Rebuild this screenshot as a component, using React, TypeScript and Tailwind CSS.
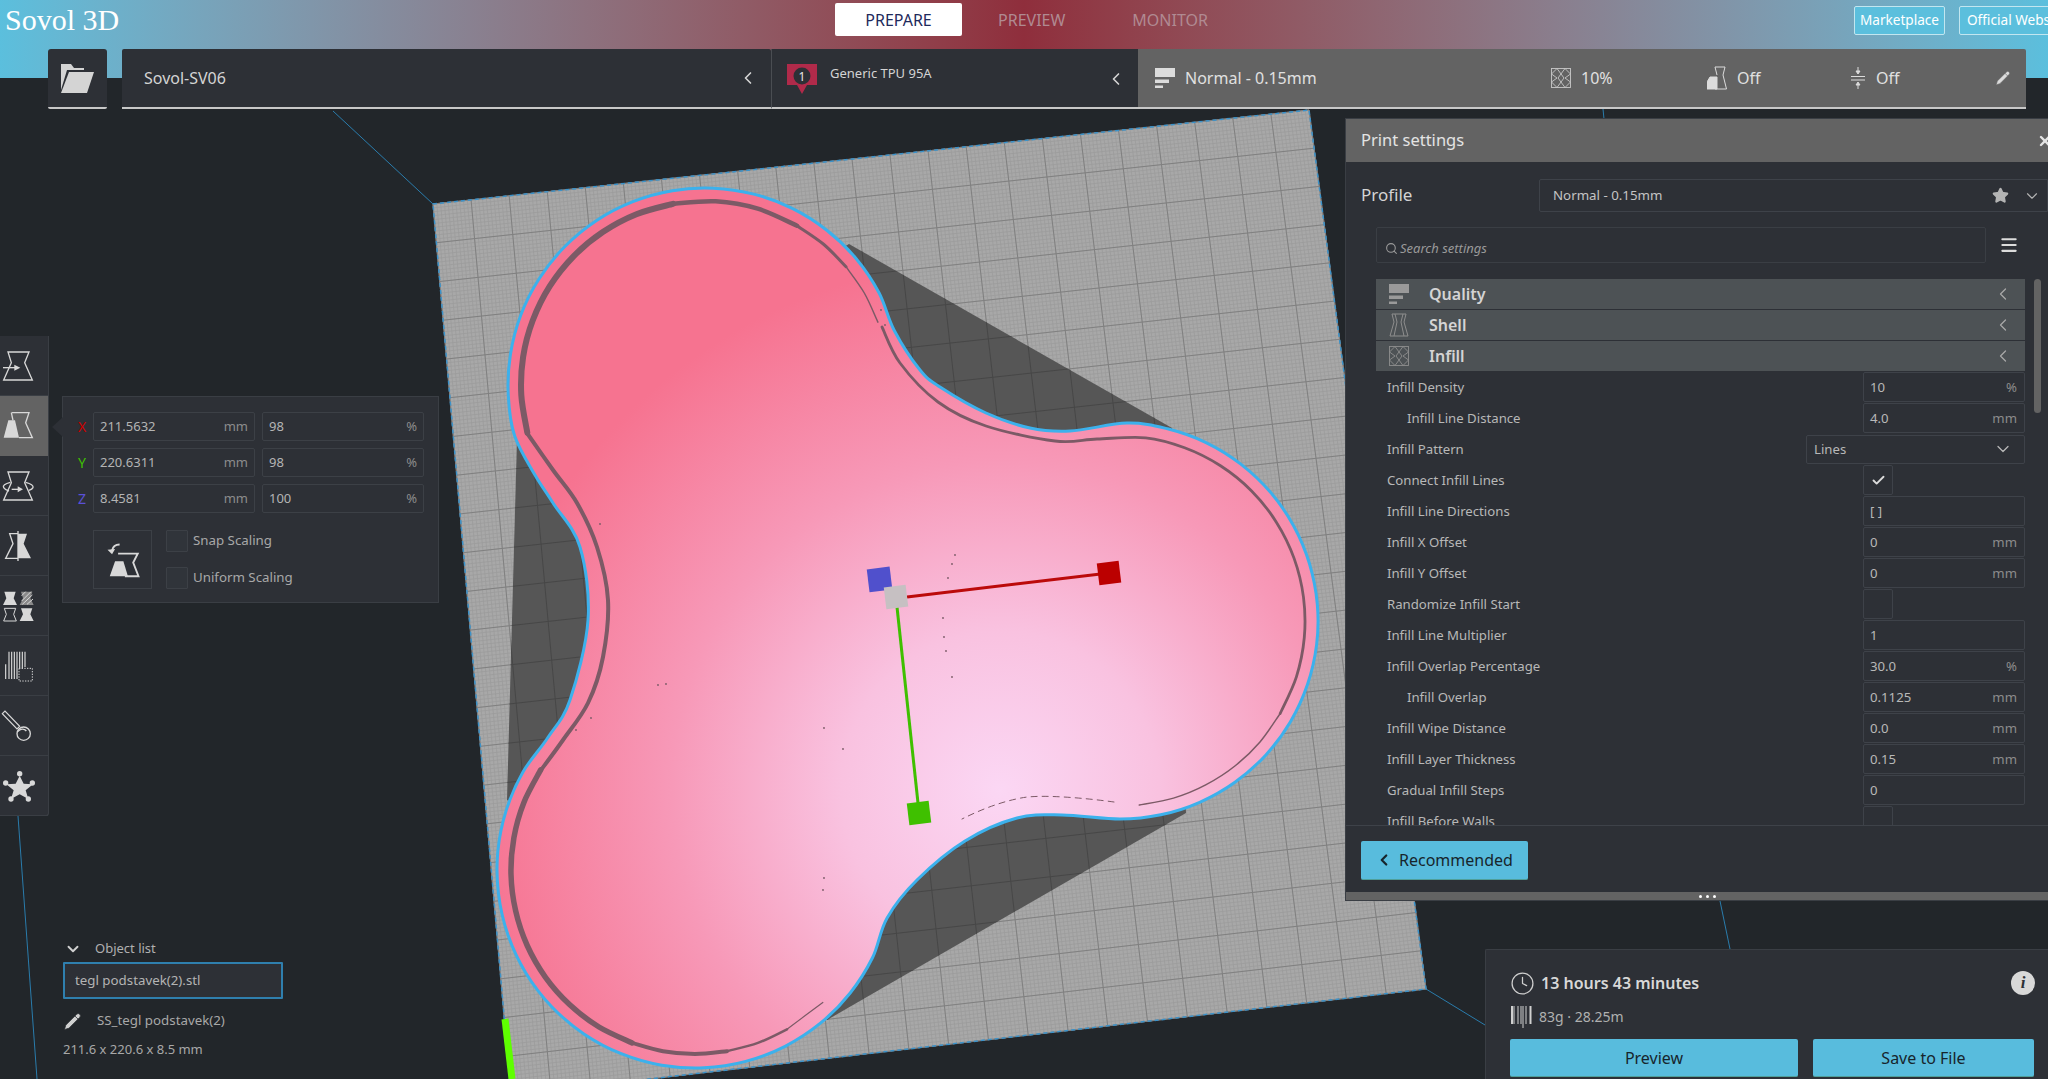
import { Check, ChevronDown, ChevronLeft, Clock, Menu, Pencil, Search, Star, X } from "lucide-react"
import type { ReactNode } from "react"

type P = [number, number]

// closed or open catmull-rom through points
const smooth = (pts: P[], closed = false) => {
  const n = pts.length
  const at = (i: number) => (closed ? pts[(i + n) % n] : pts[Math.max(0, Math.min(n - 1, i))])
  let d = `M${pts[0][0]} ${pts[0][1]}`
  const last = closed ? n : n - 1
  for (let i = 0; i < last; i++) {
    const p0 = at(i - 1), p1 = at(i), p2 = at(i + 1), p3 = at(i + 2)
    const c1x = p1[0] + (p2[0] - p0[0]) / 6, c1y = p1[1] + (p2[1] - p0[1]) / 6
    const c2x = p2[0] - (p3[0] - p1[0]) / 6, c2y = p2[1] - (p3[1] - p1[1]) / 6
    d += `C${c1x.toFixed(1)} ${c1y.toFixed(1)} ${c2x.toFixed(1)} ${c2y.toFixed(1)} ${p2[0]} ${p2[1]}`
  }
  return closed ? d + "Z" : d
}

// points on a circle, angles in degrees, clockwise on screen
const arc = (cx: number, cy: number, r: number, from: number, to: number, step = 12): P[] => {
  const out: P[] = []
  const count = Math.max(1, Math.round((to - from) / step))
  for (let i = 0; i <= count; i++) {
    const a = ((from + ((to - from) * i) / count) * Math.PI) / 180
    out.push([Math.round((cx + r * Math.cos(a)) * 10) / 10, Math.round((cy + r * Math.sin(a)) * 10) / 10])
  }
  return out
}

const TL: P = [433, 204], TR: P = [1309, 110], BR: P = [1426, 989], BL: P = [511, 1095]
const lerp = (a: P, b: P, t: number): P => [a[0] + (b[0] - a[0]) * t, a[1] + (b[1] - a[1]) * t]

const gridPath = (count: number, step: number) => {
  let d = ""
  for (let i = 0; i <= count; i += step) {
    const t = i / count
    const a = lerp(TL, TR, t), b = lerp(BL, BR, t)
    const c = lerp(TL, BL, t), e = lerp(TR, BR, t)
    d += `M${a[0].toFixed(1)} ${a[1].toFixed(1)}L${b[0].toFixed(1)} ${b[1].toFixed(1)}`
    d += `M${c[0].toFixed(1)} ${c[1].toFixed(1)}L${e[0].toFixed(1)} ${e[1].toFixed(1)}`
  }
  return d
}

const outline: P[] = [
  ...arc(705, 385, 197, 165, 344),
  [920, 370], [940, 387], [986, 413], [1030, 428], [1070, 431],
  ...arc(1120, 621, 198, 272, 450),
  [1062, 815], [1017, 818], [965, 841], [917, 880],
  ...arc(695, 870, 198, 14, 222),
  [570, 700], [588, 620], [580, 547], [553, 503], [535, 475],
]

const BOTTOM: [number, number, number] = [695, 870, 184]
const TOP: [number, number, number] = [705, 385, 184]
const innerParts: { pts: P[]; w: number }[] = [
  { pts: arc(...BOTTOM, 46, 60), w: 1.2 },
  { pts: arc(...BOTTOM, 60, 80), w: 2.5 },
  { pts: arc(...BOTTOM, 80, 110), w: 4 },
  { pts: arc(...BOTTOM, 110, 213), w: 5.5 },
  { pts: [[541, 770], [563, 740], [588, 703], [603, 657], [608, 600], [597, 547], [577, 503], [553, 470], [527, 433]], w: 4 },
  { pts: arc(...TOP, 165, 260), w: 6 },
  { pts: arc(...TOP, 260, 300), w: 4.5 },
  { pts: arc(...TOP, 300, 320), w: 3 },
  { pts: arc(...TOP, 320, 340), w: 1.5 },
  { pts: [[882, 327], [900, 363], [938, 402], [986, 426], [1055, 441], [1097, 439], ...arc(1120, 621, 185, 278, 390)], w: 2.8 },
  { pts: arc(1120, 621, 185, 390, 444), w: 1.5 },
]
const specks: P[] = [[955,555],[952,564],[948,578],[943,618],[944,637],[946,651],[952,677],[824,728],[843,749],[658,685],[666,684],[591,718],[576,730],[824,878],[823,890],[600,524],[881,310],[885,325]]

const SHADOW = "849,244 1172,428 1186,813 827,1020 507,800 517,440"

function Viewport() {
  const corners = [TL, TR, BR, BL].map(p => p.join(",")).join(" ")
  return (
    <svg className="absolute inset-0 z-0" width={2048} height={1079} viewBox="0 0 2048 1079">
      <defs>
        <radialGradient id="pink" gradientUnits="userSpaceOnUse" cx={1000} cy={790} r={530}>
          <stop offset="0" stopColor="#fbd7f4" />
          <stop offset="0.3" stopColor="#f9c2e0" />
          <stop offset="0.62" stopColor="#f799b8" />
          <stop offset="1" stopColor="#f67390" />
        </radialGradient>
        <clipPath id="shadow">
          <polygon points={SHADOW} />
        </clipPath>
      </defs>
      <g stroke="#2a7cac" strokeWidth={1} fill="none">
        <path d="M333 111L433 204" />
        <path d="M18 816L37 1079" />
        <path d="M1426 989L1485 1025" />
        <path d="M1720 901L1730 949" />
        <path d="M1603 109L1604 119" />
      </g>
      <polygon points={corners} fill="#a8a8a8" />
      <path d={gridPath(230, 1)} stroke="#9c9c9c" strokeWidth={0.8} fill="none" />
      <path d={gridPath(230, 10)} stroke="#808080" strokeWidth={1} fill="none" />
      <polygon points={corners} fill="none" stroke="#3b92c9" strokeWidth={1.5} strokeDasharray="4 3" />
      <polygon points={SHADOW} fill="#565656" />
      <path d={gridPath(230, 10)} stroke="#474747" strokeWidth={1} fill="none" clipPath="url(#shadow)" />
      <path d={smooth(outline, true)} fill="url(#pink)" stroke="#3cb1ec" strokeWidth={3} />
      <g fill="none" stroke="#7c5a66" strokeLinecap="round">
        {innerParts.map((p, i) => <path key={i} d={smooth(p.pts)} strokeWidth={p.w} />)}
        <path d="M1114 802C1085 798 1040 794 1021 798C1000 802 980 810 962 819" strokeWidth={1} strokeDasharray="6 5" />
      </g>
      <g fill="#7a5a66">
        {specks.map((s, i) => <circle key={i} cx={s[0]} cy={s[1]} r={0.9} />)}
      </g>
      <path d="M907 597L1109 573" stroke="#bb0a0a" strokeWidth={3} />
      <path d="M897 607L918 803" stroke="#3fc000" strokeWidth={3} />
      <rect x={1098} y={562} width={22} height={22} fill="#bb0000" transform="rotate(-7 1109 573)" />
      <rect x={868} y={568} width={23} height={23} fill="#5050cc" transform="rotate(-7 879 579)" />
      <rect x={885} y={586} width={22} height={22} fill="#c6c0c2" transform="rotate(-7 896 597)" />
      <rect x={908} y={802} width={22} height={22} fill="#3fc000" transform="rotate(-7 919 813)" />
      <path d="M505 1019L512 1079" stroke="#5fff00" strokeWidth={7} />
    </svg>
  )
}

const VASE = "M15 3H78L65 35L88 87H2L25 35Z"

function ToolIcon({ children }: { children: ReactNode }) {
  return (
    <svg width={30} height={30} viewBox="0 0 90 90" fill="none" stroke="#d8d8d8" strokeWidth={4} className="ml-[3px]" overflow="visible">
      {children}
    </svg>
  )
}

const tools: ReactNode[] = [
  <>
    <path d={VASE} />
    <path d="M0 50H36" />
    <path d="M34 41L52 50L34 59Z" fill="#d8d8d8" stroke="none" />
  </>,
  <>
    <path d="M26 5H78L68 35L88 80H48" />
    <path d="M16 28H36L48 80H2Z" fill="#d8d8d8" stroke="none" />
    <path d="M25 5L30 28" />
  </>,
  <>
    <path d={VASE} />
    <path d="M22 34C6 38 -2 44 2 50C5 55 12 58 18 60" />
    <path d="M68 34C84 38 92 44 90 50C88 54 84 56 78 58" />
    <path d="M26 55H48" />
    <path d="M44 46L60 55L44 64Z" fill="#d8d8d8" stroke="none" />
  </>,
  <>
    <path d="M45 0V90" />
    <path d="M45 8H20L30 38L8 82H45" />
    <path d="M45 8H72L62 38L84 82H45Z" fill="#d8d8d8" stroke="none" />
  </>,
  <>
    <path d="M4 2H38L32 22L42 42H0L10 22Z" fill="#d8d8d8" stroke="none" />
    <path d="M54 2H88L82 22L92 42H50L60 22Z" fill="#8a8a8a" stroke="none" />
    <path d="M56 14L68 2M56 30L84 2M58 40L88 12M72 40L90 24" strokeWidth={3} />
    <path d="M4 52H38L32 70L40 90H2L10 70Z" strokeWidth={3} />
    <path d="M54 52H88L82 70L92 90H50L60 70Z" fill="#d8d8d8" stroke="none" />
  </>,
  <>
    <path d="M18 2V84M26 2V84M34 2V84M42 2V84M50 2V84M58 2V60M66 2V48M8 40V84" strokeWidth={3.5} />
    <rect x={48} y={52} width={40} height={38} fill="#2d3036" strokeDasharray="4 4" strokeWidth={3} />
  </>,
  <>
    <path d="M-2 8L6 0L50 46L42 54Z" strokeWidth={3.5} />
    <circle cx={62} cy={68} r={20} strokeWidth={4} />
    <path d="M44 62C52 52 64 52 70 60" strokeWidth={4} />
  </>,
  <>
    <path d="M50 14L62 38L90 40L68 58L76 84L50 70L24 84L32 58L10 40L38 38Z" fill="#d8d8d8" stroke="none" />
    <circle cx={50} cy={8} r={8} fill="#d8d8d8" stroke="none" />
    <circle cx={88} cy={36} r={8} fill="#d8d8d8" stroke="none" />
    <circle cx={76} cy={84} r={8} fill="#d8d8d8" stroke="none" />
    <circle cx={24} cy={84} r={8} fill="#d8d8d8" stroke="none" />
    <circle cx={8} cy={36} r={8} fill="#d8d8d8" stroke="none" />
  </>,
]

function ScaleField({ value, unit }: { value: string; unit: string }) {
  return (
    <div className="h-[29px] w-[162px] flex items-center justify-between px-[6px] border border-[#3c4046] rounded-[2px] bg-[#2d3036] text-[13px]">
      <span className="text-[#b4b4b4]">{value}</span>
      <span className="text-[#8c8c8c]">{unit}</span>
    </div>
  )
}

function ScaleRow({ axis, color, mm, pct }: { axis: string; color: string; mm: string; pct: string }) {
  return (
    <div className="flex items-center gap-[7px] h-[29px]">
      <span className={`w-[17px] pl-[9px] text-[14px] ${color}`}>{axis}</span>
      <ScaleField value={mm} unit="mm" />
      <ScaleField value={pct} unit="%" />
    </div>
  )
}

function ScalePanel() {
  return (
    <div className="relative ml-[13px] w-[377px] h-[207px] border border-[#3a3e44] bg-[#2d3036] pt-[15px] pl-[6px] pr-[14px]">
      <div className="absolute left-[-11px] top-[20px] w-0 h-0 border-y-[10px] border-y-transparent border-r-[11px] border-r-[#2d3036]" />
      <div className="flex flex-col gap-[7px]">
        <ScaleRow axis="X" color="text-[#cc0000]" mm="211.5632" pct="98" />
        <ScaleRow axis="Y" color="text-[#3fc000]" mm="220.6311" pct="98" />
        <ScaleRow axis="Z" color="text-[#5a50d8]" mm="8.4581" pct="100" />
      </div>
      <div className="flex mt-[17px] ml-[24px] gap-[14px]">
        <div className="w-[59px] h-[59px] border border-[#3c4046] flex items-center justify-center">
          <svg width={34} height={36} viewBox="0 0 90 90" fill="none" stroke="#d8d8d8" strokeWidth={5}>
            <path d="M32 28H84L72 52L86 88H50" />
            <path d="M24 48H46L58 88H10Z" fill="#d8d8d8" stroke="none" />
            <path d="M36 4C26 4 18 10 16 20" />
            <path d="M4 18L16 30L24 16Z" fill="#d8d8d8" stroke="none" />
          </svg>
        </div>
        <div className="flex flex-col gap-[15px]">
          {["Snap Scaling", "Uniform Scaling"].map(t => (
            <div key={t} className="flex items-center gap-[5px] h-[22px]">
              <div className="w-[22px] h-[22px] border border-[#3c4046] bg-[#30343a] rounded-[1px]" />
              <span className="text-[13.3px] text-[#a8a8a8]">{t}</span>
            </div>
          ))}
        </div>
      </div>
    </div>
  )
}

function LeftColumn() {
  return (
    <div className="w-[439px] flex flex-col h-full">
      <div className="flex items-start mt-[227px]">
        <div className="w-[49px] h-[480px] bg-[#2d3036] border-r border-b border-[#3a3e44] rounded-br-[3px] flex flex-col">
          {tools.map((t, i) => (
            <div key={i} className={i === 1 ? "h-[60px] shrink-0 flex items-center bg-[#636363]" : "h-[60px] shrink-0 flex items-center border-b border-[#3a3e44]"}>
              <ToolIcon>{t}</ToolIcon>
            </div>
          ))}
        </div>
        <div className="mt-[60px]">
          <ScalePanel />
        </div>
      </div>
      <div className="mt-auto pl-[63px] pb-[20px]">
        <div className="flex items-center h-[20px] pl-[1px] gap-[13px] text-[13px] text-[#b0b0b0]">
          <ChevronDown size={18} strokeWidth={2.5} className="text-[#d0d0d0]" />
          <span>Object list</span>
        </div>
        <div className="mt-[3px] w-[220px] h-[37px] border-2 border-[#2f7fae] bg-[#2d3036] flex items-center pl-[10px] text-[13.3px] text-[#b4b4b4] rounded-[1px]">
          tegl podstavek(2).stl
        </div>
        <div className="mt-[12px] flex items-center gap-[15px] text-[13.3px] text-[#a8a8a8] h-[20px]">
          <Pencil size={19} fill="#d0d0d0" stroke="#22262a" strokeWidth={1} />
          <span>SS_tegl podstavek(2)</span>
        </div>
        <div className="mt-[8px] text-[13px] leading-[20px] text-[#a8a8a8]">211.6 x 220.6 x 8.5 mm</div>
      </div>
    </div>
  )
}

const QualityIcon = ({ color, size = 20 }: { color: string; size?: number }) => (
  <svg width={size} height={size} viewBox="0 0 20 20" fill={color}>
    <rect x={0} y={0} width={20} height={9} />
    <rect x={0} y={11.5} width={14} height={3.5} />
    <rect x={0} y={17.5} width={8} height={2.5} />
  </svg>
)

const InfillIcon = ({ color, size = 20 }: { color: string; size?: number }) => (
  <svg width={size} height={size} viewBox="0 0 20 20" fill="none" stroke={color} strokeWidth={0.9}>
    <rect x={0.5} y={0.5} width={19} height={19} />
    <path d="M0.5 6L6 0.5M14 0.5L19.5 6M0.5 14L6 19.5M14 19.5L19.5 14M6 0.5L13 10L6 19.5M14 0.5L7 10L14 19.5M0.5 6L6 10L0.5 14M19.5 6L14 10L19.5 14" />
  </svg>
)

const ShellIcon = ({ color }: { color: string }) => (
  <svg width={20} height={24} viewBox="0 0 20 24" fill="none" stroke={color} strokeWidth={1}>
    <path d="M3 1H17L15 9L19 23H1L5 9Z" />
    <path d="M6 1L8 9L5 23M14 1L12 9L15 23" />
  </svg>
)

function BarItem({ icon, label, w }: { icon: ReactNode; label: string; w: string }) {
  return (
    <div className={`flex items-center gap-[10px] text-[16px] text-[#e0e0e0] ${w}`}>
      {icon}
      <span>{label}</span>
    </div>
  )
}

function TopBars() {
  return (
    <>
      <div className="h-[78px] bg-linear-to-r from-[#5bbfdd] via-[#8f2e3c] to-[#5bbfdd] relative overflow-hidden">
        <div className="flex h-[40px] items-center">
          <span className="pl-[5px] w-[835px] -mt-[2px] text-[30px] text-white font-['Liberation_Serif',serif]">Sovol 3D</span>
          <div className="w-[127px] h-[33px] bg-white rounded-[2px] flex items-center justify-center text-[16px] text-[#1f2a5c] -mt-[1px]">PREPARE</div>
          <div className="flex text-[16px] text-[#b08a92]">
            <span className="ml-[36px]">PREVIEW</span>
            <span className="ml-[67px]">MONITOR</span>
          </div>
          <div className="ml-auto flex gap-[14px] -mr-[57px]">
            <div className="w-[91px] h-[29px] border border-[#c2e6f0] rounded-[2px] bg-[#5bbfdd] flex items-center justify-center text-[13.6px] text-white">Marketplace</div>
            <div className="w-[146px] h-[29px] border border-[#c2e6f0] rounded-[2px] bg-[#5bbfdd] flex items-center pl-[7px] text-[13.6px] text-white">Official Website</div>
          </div>
        </div>
      </div>
      <div className="relative -mt-[29px] flex pl-[48px] pr-[22px] h-[60px]">
        <div className="w-[59px] bg-[#2d3036] border-b-2 border-[#c8c8c8] rounded-t-[3px] rounded-b-[2px] flex items-center justify-center">
          <svg width={35} height={31} viewBox="0 0 35 31" fill="#d4d4d4">
            <path d="M1 1H11L14 5H24V7H7L1 27Z" />
            <path d="M9 9H34L27 30H1Z" />
          </svg>
        </div>
        <div className="ml-[15px] w-[649px] bg-[#2d3036] border-b-2 border-[#c8c8c8] rounded-t-[2px] flex items-center pl-[22px] pr-[13px] justify-between text-[16px] text-[#d4d4d4]">
          <span>Sovol-SV06</span>
          <ChevronLeft size={20} strokeWidth={2} />
        </div>
        <div className="w-[367px] bg-[#2d3036] border-b-2 border-l border-l-[#4a4d52] border-b-[#c8c8c8] flex items-start pl-[15px] pr-[12px] pt-[15px] text-[13px] text-[#d4d4d4]">
          <svg width={30} height={30} viewBox="0 0 30 30" className="shrink-0">
            <path d="M0 0H30V21H20L15 30L10 21H0Z" fill="#b02a4a" />
            <circle cx={15} cy={12} r={8.5} fill="#2d3036" />
            <text x={15} y={16.5} textAnchor="middle" fontSize={12} fill="#e8e8e8">1</text>
          </svg>
          <span className="ml-[13px]">Generic TPU 95A</span>
          <ChevronLeft size={20} strokeWidth={2} className="ml-auto mt-[5px]" />
        </div>
        <div className="flex-1 bg-[#636363] border-b-2 border-[#c8c8c8] rounded-tr-[2px] flex items-center pl-[17px] pr-[14px]">
          <BarItem w="w-[396px]" icon={<QualityIcon color="#dcdcdc" />} label="Normal - 0.15mm" />
          <BarItem w="w-[156px]" icon={<InfillIcon color="#c8c8c8" />} label="10%" />
          <BarItem w="w-[143px]" icon={
            <svg width={20} height={24} viewBox="0 0 20 24" fill="none" stroke="#dcdcdc" strokeWidth={1}>
              <path d="M8 1H18L16 9L19.5 23H8" />
              <path d="M3 11H10V23H0V16Z" fill="#dcdcdc" />
              <path d="M8 1L10 9" />
            </svg>
          } label="Off" />
          <BarItem w="w-[145px]" icon={
            <svg width={16} height={24} viewBox="0 0 16 24" fill="#dcdcdc" stroke="#dcdcdc" strokeWidth={1}>
              <path d="M1 10.5H15M1 14H15" />
              <path d="M8 1V6M8 18V23" />
              <path d="M6 5H10L8 8ZM6 19H10L8 16Z" />
            </svg>
          } label="Off" />
          <Pencil size={16} fill="#dcdcdc" stroke="#636363" strokeWidth={1} />
        </div>
      </div>
    </>
  )
}

type Setting = { label: string; indent?: boolean; value?: string; unit?: string; kind?: "check" | "empty" | "combo" }

const settings: Setting[] = [
  { label: "Infill Density", value: "10", unit: "%" },
  { label: "Infill Line Distance", indent: true, value: "4.0", unit: "mm" },
  { label: "Infill Pattern", kind: "combo", value: "Lines" },
  { label: "Connect Infill Lines", kind: "check" },
  { label: "Infill Line Directions", value: "[ ]" },
  { label: "Infill X Offset", value: "0", unit: "mm" },
  { label: "Infill Y Offset", value: "0", unit: "mm" },
  { label: "Randomize Infill Start", kind: "empty" },
  { label: "Infill Line Multiplier", value: "1" },
  { label: "Infill Overlap Percentage", value: "30.0", unit: "%" },
  { label: "Infill Overlap", indent: true, value: "0.1125", unit: "mm" },
  { label: "Infill Wipe Distance", value: "0.0", unit: "mm" },
  { label: "Infill Layer Thickness", value: "0.15", unit: "mm" },
  { label: "Gradual Infill Steps", value: "0" },
  { label: "Infill Before Walls", kind: "empty" },
]

function SettingRow({ s }: { s: Setting }) {
  return (
    <div className="h-[30px] shrink-0 flex items-center text-[13.2px]">
      <span className={s.indent ? "pl-[31px] mt-[2px] text-[#b8b8b8]" : "pl-[11px] mt-[2px] text-[#b8b8b8]"}>{s.label}</span>
      {s.kind === "combo" ? (
        <div className="ml-auto w-[219px] h-[29px] border border-[#3e4249] rounded-[2px] flex items-center justify-between pl-[7px] pr-[11px] text-[#b8b8b8]">
          <span className="mt-[2px]">{s.value}</span>
          <ChevronDown size={20} strokeWidth={1.5} className="text-[#b8b8b8]" />
        </div>
      ) : s.kind ? (
        <div className="ml-auto mr-[132px] w-[30px] h-[30px] border border-[#3e4249] rounded-[2px] flex items-center justify-center">
          {s.kind === "check" && <Check size={15} strokeWidth={3} className="text-[#dcdcdc]" />}
        </div>
      ) : (
        <div className="ml-auto w-[162px] h-[30px] border border-[#3e4249] rounded-[2px] flex items-center justify-between pl-[6px] pr-[7px]">
          <span className="mt-[2px] text-[#b8b8b8]">{s.value}</span>
          {s.unit && <span className="mt-[2px] text-[#8c8c8c]">{s.unit}</span>}
        </div>
      )}
    </div>
  )
}

function Category({ icon, label }: { icon: ReactNode; label: string }) {
  return (
    <div className="h-[30px] shrink-0 bg-[#4d5255] flex items-center">
      <div className="w-[53px] pl-[13px] flex items-center">{icon}</div>
      <span className="text-[16px] font-semibold text-[#d4d4d4]">{label}</span>
      <ChevronLeft size={20} strokeWidth={1.5} className="ml-auto mr-[12px] text-[#a8a8a8]" />
    </div>
  )
}

function PrintSettings() {
  return (
    <div className="relative w-[702px] h-[781px] bg-[#2d3036] flex flex-col shadow-[0_0_0_1px_#3a3e44]">
      <div className="h-[43px] shrink-0 bg-[#636363] flex items-center justify-between pl-[15px] text-[16.5px] text-[#e4e4e4]">
        <span>Print settings</span>
        <X size={16} strokeWidth={3.5} className="-mr-[5px]" />
      </div>
      <div className="flex items-center mt-[17px] h-[33px] shrink-0">
        <span className="w-[193px] pl-[15px] -mt-[1px] text-[17px] text-[#d4d4d4]">Profile</span>
        <div className="flex-1 h-[33px] border border-[#3e4249] rounded-l-[2px] flex items-center pl-[13px] pr-[6px] text-[13.3px] text-[#c4c4c4]">
          <span>Normal - 0.15mm</span>
          <Star size={17} fill="#b4b4b4" stroke="#b4b4b4" className="ml-auto" />
          <ChevronDown size={18} strokeWidth={1.5} className="ml-[14px] text-[#b4b4b4]" />
        </div>
      </div>
      <div className="flex items-center mt-[15px] h-[36px] shrink-0 pl-[30px]">
        <div className="w-[610px] h-[36px] border border-[#3a3e44] rounded-[2px] flex items-center pl-[8px] pt-[7px] gap-[2px] text-[13px] italic text-[#9a9a9a]">
          <Search size={13} strokeWidth={2} />
          <span>Search settings</span>
        </div>
        <Menu size={20} strokeWidth={2.5} className="ml-[13px] text-[#dcdcdc]" />
      </div>
      <div className="relative flex-1 min-h-0 mt-[16px] overflow-hidden pl-[30px] pr-[23px]">
        <div className="flex flex-col gap-[1px]">
          <Category label="Quality" icon={<QualityIcon color="#9a9a9a" />} />
          <Category label="Shell" icon={<ShellIcon color="#8e8e8e" />} />
          <Category label="Infill" icon={<InfillIcon color="#8e8e8e" />} />
          {settings.map(s => <SettingRow key={s.label} s={s} />)}
        </div>
        <div className="absolute right-[7px] top-0 w-[7px] h-[134px] rounded-full bg-[#636363]" />
      </div>
      <div className="h-[67px] shrink-0 border-t border-[#3e4249] pl-[15px] pt-[15px]">
        <div className="w-[167px] h-[39px] bg-[#58bcdd] border-b border-b-[#4f9f9a] rounded-[2px] flex items-center gap-[6px] pl-[14px] text-[16px] text-[#17252c]">
          <ChevronLeft size={18} strokeWidth={3} />
          <span>Recommended</span>
        </div>
      </div>
      <div className="h-[8px] shrink-0 bg-[#636363] flex items-center justify-center gap-[4px] pl-[20px]">
        <span className="w-[3px] h-[3px] rounded-full bg-white" />
        <span className="w-[3px] h-[3px] rounded-full bg-white" />
        <span className="w-[3px] h-[3px] rounded-full bg-white" />
      </div>
    </div>
  )
}

function PrintResult() {
  return (
    <div className="w-[563px] h-[130px] bg-[#2d3036] border-t border-l border-[#3a3e44] rounded-tl-[2px] pl-[24px] pr-[13px] pt-[20px]">
      <div className="flex items-center h-[26px]">
        <Clock size={25} strokeWidth={1.2} className="text-[#cfcfcf]" />
        <span className="ml-[6px] text-[16px] font-semibold text-[#d8d8d8]">13 hours 43 minutes</span>
        <div className="ml-auto w-[24px] h-[24px] rounded-full bg-[#d8d8d8] flex items-center justify-center text-[17px] font-bold italic text-[#2d3036] font-['Liberation_Serif',serif]">i</div>
      </div>
      <div className="flex items-center h-[24px] mt-[8px] text-[14px] text-[#b0b0b0]">
        <svg width={22} height={24} viewBox="0 0 22 24" fill="none" stroke="#d0d0d0" strokeWidth={1} className="ml-[1px]">
          <path d="M1 2V20M3 2V20M7 2V20M10 2V20M12 2V24M15 2V20M19.5 2V20" />
          <path d="M19.5 2V20M1 2V20" strokeWidth={2} />
        </svg>
        <span className="ml-[6px]">83g · 28.25m</span>
      </div>
      <div className="flex gap-[15px] mt-[11px]">
        <div className="w-[288px] h-[38px] bg-[#58bcdd] border-b border-b-[#4f9f9a] rounded-[2px] flex items-center justify-center text-[16px] text-[#17252c]">Preview</div>
        <div className="w-[221px] h-[38px] bg-[#58bcdd] border-b border-b-[#4f9f9a] rounded-[2px] flex items-center justify-center text-[16px] text-[#17252c]">Save to File</div>
      </div>
    </div>
  )
}

export default function App() {
  return (
    <div className="relative w-[2048px] h-[1079px] overflow-hidden bg-[#22262a] font-['Noto_Sans',sans-serif]">
      <Viewport />
      <div className="relative z-10 flex flex-col h-full">
        <TopBars />
        <div className="flex-1 min-h-0 flex justify-between">
          <LeftColumn />
          <div className="flex flex-col items-end pt-[10px]">
            <PrintSettings />
            <div className="mt-auto">
              <PrintResult />
            </div>
          </div>
        </div>
      </div>
    </div>
  )
}
